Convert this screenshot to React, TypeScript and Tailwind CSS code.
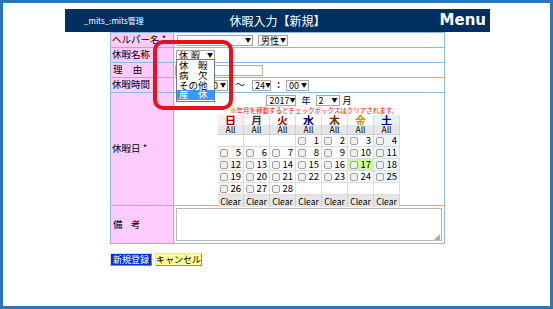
import React from "react";

const Sel = ({ w, children, t = "" }: { w: string; children?: React.ReactNode; t?: string }) => (
  <span
    className={`${w} h-[11px] border border-[#a6a6a6] bg-white flex items-center justify-between pl-[2px] pr-[1px] text-[9px] leading-none text-black whitespace-nowrap overflow-hidden shrink-0`}
  >
    <span className={t}>{children}</span>
    <span className="text-[6px]">▼</span>
  </span>
);

const days = ["日", "月", "火", "水", "木", "金", "土"];
const dayColors = [
  "text-[#990000]",
  "text-[#333333]",
  "text-[#990000]",
  "text-[#000080]",
  "text-[#663300]",
  "text-[#cc9900]",
  "text-[#000080]",
];
const headBg = ["bg-[#ffecec]", "bg-white", "bg-white", "bg-white", "bg-white", "bg-white", "bg-[#e8f1fb]"];
const cellBg = ["bg-[#fff4f4]", "bg-white", "bg-white", "bg-white", "bg-white", "bg-white", "bg-[#eef5fd]"];

const weeks: (number | null)[][] = [
  [null, null, null, 1, 2, 3, 4],
  [5, 6, 7, 8, 9, 10, 11],
  [12, 13, 14, 15, 16, 17, 18],
  [19, 20, 21, 22, 23, 24, 25],
  [26, 27, 28, null, null, null, null],
];

const Cb = () => (
  <span className="w-[8px] h-[8px] rounded-[2px] border border-[#a0a0a0] bg-[#f0f0f0] shrink-0" />
);

export default function App() {
  return (
    <div className="relative w-[553px] h-[309px] border-[3px] border-[#2e75b6] bg-white overflow-hidden whitespace-nowrap font-['Noto_Sans_CJK_JP','Noto_Sans',sans-serif] text-black">
      {/* header */}
      <div className="ml-[62px] mt-[6px] w-[425px] h-[23px] bg-[#00305f] grid grid-cols-[1fr_auto_1fr] items-center text-white">
        <div className="pl-[19px] text-[8px] leading-none">_mits_:mits管理</div>
        <div className="text-[12px] leading-none">休暇入力【新規】</div>
        <div className="text-right pr-[4px] text-[15px] font-bold leading-none font-['DejaVu_Sans',sans-serif]">Menu</div>
      </div>

      {/* form table */}
      <div className="ml-[107px] w-[335px] border border-[#8fb8dc] grid grid-cols-[63px_1fr] text-[9.5px] leading-none">
        {/* row 1 */}
        <div className="h-[15px] bg-[#ffccff] border-r border-b border-[#8fb8dc] flex items-center pl-[1px]">ヘルパー名 *</div>
        <div className="h-[15px] border-b border-[#8fb8dc] flex items-center pl-[3px] gap-[5px]">
          <Sel w="w-[76px]" />
          <Sel w="w-[30px]">男性</Sel>
        </div>
        {/* row 2 */}
        <div className="h-[15px] bg-[#ffccff] border-r border-b border-[#8fb8dc] flex items-center pl-[1px]">休暇名称 *</div>
        <div className="h-[15px] border-b border-[#8fb8dc] flex items-center pl-[2px]">
          <Sel w="w-[39px]" t="tracking-[3px]">休暇</Sel>
        </div>
        {/* row 3 */}
        <div className="h-[15px] bg-[#ffccff] border-r border-b border-[#8fb8dc] flex items-center pl-[2px] tracking-[4px]">理 由</div>
        <div className="h-[15px] border-b border-[#8fb8dc] flex items-center pl-[1px]">
          <span className="w-[88px] h-[11px] border border-[#b0b0b0] bg-white" />
        </div>
        {/* row 4 */}
        <div className="h-[15px] bg-[#ffccff] border-r border-b border-[#8fb8dc] flex items-center pl-[1px]">休暇時間 *</div>
        <div className="h-[15px] border-b border-[#8fb8dc] flex items-center pl-[2px]">
          <Sel w="w-[17px]">0</Sel>
          <span className="w-[12px] text-center font-bold">:</span>
          <Sel w="w-[23px]">00</Sel>
          <span className="w-[24px] text-center">～</span>
          <Sel w="w-[19px]">24</Sel>
          <span className="w-[15px] text-center font-bold">:</span>
          <Sel w="w-[23px]">00</Sel>
        </div>
        {/* row 5 */}
        <div className="h-[113px] bg-[#ffccff] border-r border-b border-[#8fb8dc] flex items-center pl-[1px]">休暇日 *</div>
        <div className="h-[113px] border-b border-[#8fb8dc] flex flex-col items-center pt-[2px]">
          <div className="flex items-center gap-[3px] h-[10px]">
            <Sel w="w-[30px]">2017</Sel>
            <span className="text-[9px] px-[2px]">年</span>
            <Sel w="w-[24px]">2</Sel>
            <span className="text-[9px]">月</span>
          </div>
          <div className="mt-[2px] h-[7px] text-[6.5px] leading-[7px] text-[#ff0000] pl-[10px]">
            ※年月を移動するとチェックボックスはクリアされます。
          </div>
          <div className="mt-[1px] w-[182px] grid grid-cols-7">
            {days.map((d, i) => (
              <div
                key={d}
                className={`h-[10px] flex items-center justify-center text-[11px] font-bold ${dayColors[i]} ${headBg[i]} border-r border-[#dddddd]`}
              >
                {d}
              </div>
            ))}
            {days.map((d) => (
              <div
                key={"a" + d}
                className="h-[10px] flex items-center justify-center text-[8.5px] bg-[#e6e6e6] border-r border-b border-[#d0d0d0]"
              >
                All
              </div>
            ))}
            {weeks.map((w, wi) =>
              w.map((n, i) => (
                <div
                  key={wi + "-" + i}
                  className={`h-[12px] flex items-center justify-between pl-[2px] pr-[2px] text-[9.5px] border-r border-b border-[#dddddd] ${
                    n === 17 ? "bg-[#ccff99]" : n === null ? "bg-white" : cellBg[i]
                  }`}
                >
                  {n !== null && (
                    <>
                      <Cb />
                      <span>{n}</span>
                    </>
                  )}
                </div>
              ))
            )}
            {days.map((d) => (
              <div
                key={"c" + d}
                className="h-[12px] flex items-center justify-center text-[8.5px] bg-[#e6e6e6] border-r border-[#d0d0d0]"
              >
                Clear
              </div>
            ))}
          </div>
        </div>
        {/* row 6 */}
        <div className="h-[37px] bg-[#ffccff] flex items-center pl-[2px] border-r border-[#8fb8dc] tracking-[3px]">備 考</div>
        <div className="h-[37px] flex items-center pl-[2px] pr-[2px]">
          <div className="relative w-full h-[33px] border border-[#b8b8b8] bg-white">
            <span className="absolute right-[1px] bottom-0 text-[6px] text-[#aaaaaa] leading-none">◢</span>
          </div>
        </div>
      </div>

      {/* buttons */}
      <div className="ml-[107px] mt-[9px] flex gap-[3px]">
        <div className="w-[42px] h-[13px] bg-[#0033cc] border border-t-[#dddddd] border-l-[#dddddd] border-r-[#888888] border-b-[#888888] text-white text-[9px] leading-none flex items-center justify-center">
          新規登録
        </div>
        <div className="w-[47px] h-[13px] bg-[#ffff99] border border-t-[#dddddd] border-l-[#dddddd] border-r-[#888888] border-b-[#888888] text-black text-[9px] leading-none flex items-center justify-center">
          キャンセル
        </div>
      </div>

      {/* open dropdown list */}
      <div className="absolute left-[173px] top-[56px] w-[39px] h-[43px] border border-[#777777] bg-white flex flex-col text-[9.5px] leading-none py-[1px]">
        <div className="h-[10px] flex items-center pl-[2px]">休　暇</div>
        <div className="h-[10px] flex items-center pl-[2px]">病　欠</div>
        <div className="h-[10px] flex items-center pl-[2px]">その他</div>
        <div className="h-[10px] flex items-center pl-[2px] bg-[#3399ff] text-white">産　休</div>
      </div>

      {/* red highlight */}
      <div className="absolute left-[150px] top-[37px] w-[80px] h-[70px] border-[4px] border-[#e8101a] rounded-[10px]" />
    </div>
  );
}
